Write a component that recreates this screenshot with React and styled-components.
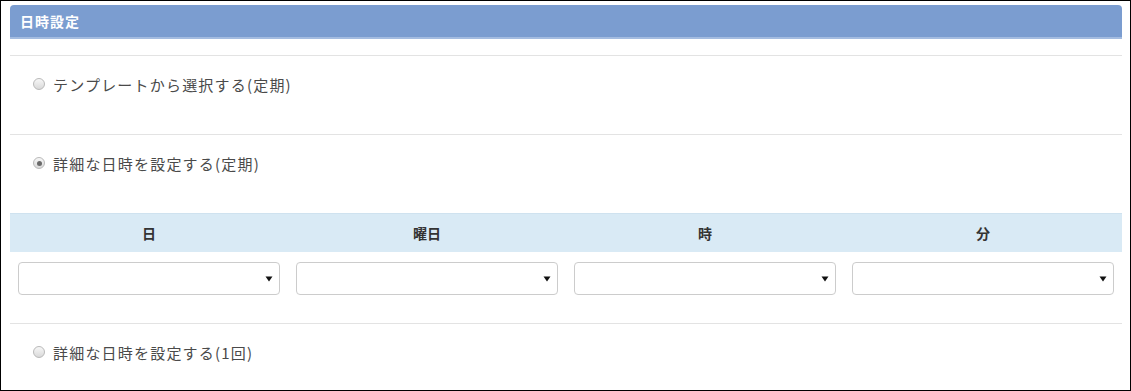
import React from "react";
import styled, { createGlobalStyle } from "styled-components";

const Global = createGlobalStyle`
  html, body { margin: 0; padding: 0; background: #fff; }
  body { font-family: "Noto Sans CJK JP", "Noto Sans", sans-serif; }
  * { box-sizing: border-box; }
`;

const Frame = styled.div`
  width: 1131px;
  height: 391px;
  border: 1px solid #000;
  padding: 4px 8px 0 9px;
  overflow: hidden;
  background: #fff;
`;

const PanelHeader = styled.div`
  height: 34px;
  background: #7b9dd0;
  border-bottom: 2px solid #a4bce0;
  border-radius: 4px 4px 0 0;
  display: flex;
  align-items: center;
  padding-left: 10px;
  color: #fff;
  font-weight: 700;
  font-size: 14px;
  letter-spacing: 1px;
  margin-bottom: 16px;
`;

const Section = styled.div`
  border-top: 1px solid #e3e3e3;
`;

const RadioRow = styled.label`
  display: flex;
  align-items: center;
  gap: 8px;
  height: 24px;
  margin: 16px 0 ${(p) => p.$after}px 23px;
  font-size: 15px;
  letter-spacing: 1.2px;
  color: #4a4a4a;
`;

const RadioDot = styled.span`
  width: 12px;
  height: 12px;
  border-radius: 50%;
  border: 1px solid #b9b9b9;
  background: linear-gradient(#f7f7f7, #d9d9d9);
  display: flex;
  align-items: center;
  justify-content: center;
  flex: none;
  &::after {
    content: "";
    width: 5px;
    height: 5px;
    border-radius: 50%;
    background: ${(p) => (p.$checked ? "#6a6a6a" : "transparent")};
  }
`;

const Grid = styled.div`
  display: grid;
  grid-template-columns: repeat(4, 1fr);
  margin-bottom: 28px;
`;

const HeadCell = styled.div`
  height: 39px;
  background: #d9eaf5;
  border-top: 1px solid #cfe2ef;
  display: flex;
  align-items: center;
  justify-content: center;
  font-weight: 700;
  font-size: 14px;
  color: #333;
`;

const BodyCell = styled.div`
  padding: 10px 8px 0;
`;

const Select = styled.div`
  height: 33px;
  border: 1px solid #cccccc;
  border-radius: 4px;
  background: #fff;
  display: flex;
  align-items: center;
  justify-content: flex-end;
  padding-right: 6px;
`;

const Caret = () => (
  <svg width="8" height="6" viewBox="0 0 8 6">
    <path d="M0.5 0.5 L7.5 0.5 L4 5.5 Z" fill="#111" />
  </svg>
);

const cols = ["日", "曜日", "時", "分"];

export default function App() {
  return (
    <>
      <Global />
      <Frame>
        <PanelHeader>日時設定</PanelHeader>
        <Section>
          <RadioRow $after={38}>
            <RadioDot />
            テンプレートから選択する(定期)
          </RadioRow>
        </Section>
        <Section>
          <RadioRow $after={38}>
            <RadioDot $checked />
            詳細な日時を設定する(定期)
          </RadioRow>
          <Grid>
            {cols.map((c) => (
              <HeadCell key={c}>{c}</HeadCell>
            ))}
            {cols.map((c) => (
              <BodyCell key={c}>
                <Select>
                  <Caret />
                </Select>
              </BodyCell>
            ))}
          </Grid>
        </Section>
        <Section>
          <RadioRow $after={20}>
            <RadioDot />
            詳細な日時を設定する(1回)
          </RadioRow>
        </Section>
      </Frame>
    </>
  );
}
